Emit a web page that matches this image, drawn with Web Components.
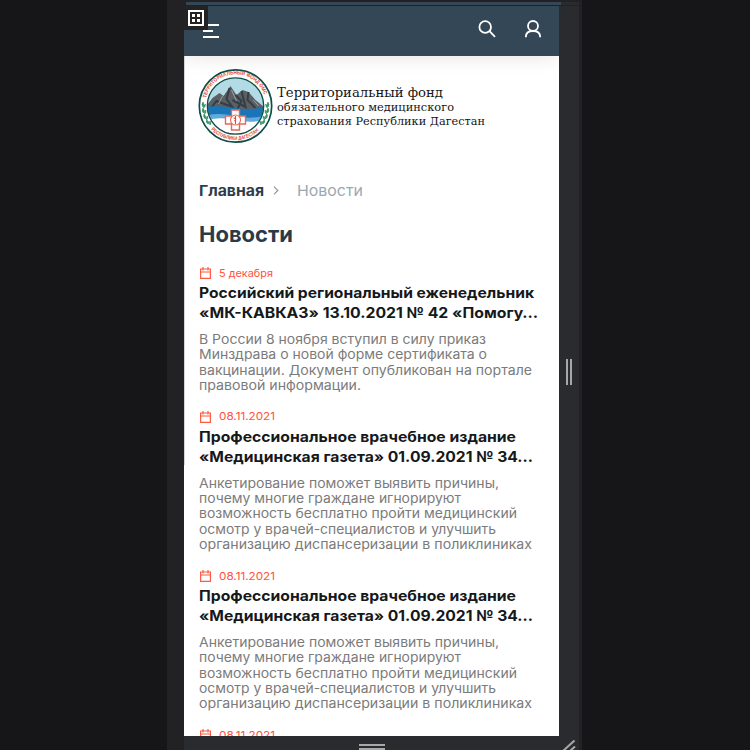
<!DOCTYPE html>
<html lang="ru">
<head>
<meta charset="utf-8">
<title>Новости</title>
<style>
html,body{margin:0;width:750px;height:750px;overflow:hidden;background:#161618;font-family:Inter,"Open Sans",sans-serif}
</style>
</head>
<body>
<device-frame>
  <page-header></page-header>
  <site-brand></site-brand>
  <bread-crumbs></bread-crumbs>
  <page-title><fit-line w="94">Новости</fit-line></page-title>
  <news-item>
    <fit-line slot="date" w="54">5 декабря</fit-line>
    <fit-line slot="title" w="335">Российский региональный еженедельник</fit-line>
    <fit-line slot="title" w="339">«МК-КАВКАЗ» 13.10.2021 № 42 «Помогу…</fit-line>
    <fit-line w="287">В России 8 ноября вступил в силу приказ</fit-line>
    <fit-line w="288">Минздрава о новой форме сертификата о</fit-line>
    <fit-line w="333">вакцинации. Документ опубликован на портале</fit-line>
    <fit-line w="162">правовой информации.</fit-line>
  </news-item>
  <news-item>
    <fit-line slot="date" w="56">08.11.2021</fit-line>
    <fit-line slot="title" w="317">Профессиональное врачебное издание</fit-line>
    <fit-line slot="title" w="334">«Медицинская газета» 01.09.2021 № 34…</fit-line>
    <fit-line w="300">Анкетирование поможет выявить причины,</fit-line>
    <fit-line w="262">почему многие граждане игнорируют</fit-line>
    <fit-line w="318">возможность бесплатно пройти медицинский</fit-line>
    <fit-line w="297">осмотр у врачей-специалистов и улучшить</fit-line>
    <fit-line w="333">организацию диспансеризации в поликлиниках</fit-line>
  </news-item>
  <news-item>
    <fit-line slot="date" w="56">08.11.2021</fit-line>
    <fit-line slot="title" w="317">Профессиональное врачебное издание</fit-line>
    <fit-line slot="title" w="334">«Медицинская газета» 01.09.2021 № 34…</fit-line>
    <fit-line w="300">Анкетирование поможет выявить причины,</fit-line>
    <fit-line w="262">почему многие граждане игнорируют</fit-line>
    <fit-line w="318">возможность бесплатно пройти медицинский</fit-line>
    <fit-line w="297">осмотр у врачей-специалистов и улучшить</fit-line>
    <fit-line w="333">организацию диспансеризации в поликлиниках</fit-line>
  </news-item>
  <news-item>
    <fit-line slot="date" w="56">08.11.2021</fit-line>
  </news-item>
</device-frame>
<script>
const define = (name, html, ready) => customElements.define(name, class extends HTMLElement {
  connectedCallback() {
    if (this.shadowRoot) return;
    this.attachShadow({mode: 'open'}).innerHTML = html;
    if (ready) ready(this);
  }
});

define('device-frame', `<style>
:host{display:grid;grid-template-columns:167px 17px 375px 20px 3px 168px;grid-template-rows:2px 3px 1px 730px 14px;width:750px;height:750px}
.track{grid-area:1/2/6/6;background:#222224}
.top{grid-area:2/3/3/5;margin-left:2px;margin-right:18px;background:#344757}
.edge{grid-area:2/4/3/5;margin-left:2px;background:#2a2b2e}
.side{grid-area:4/4/6/5;background:#2a2b2f;display:flex;justify-content:center;gap:2px;padding-top:353px;box-sizing:border-box}
.side i{width:2px;height:26px;background:#a8a8aa}
.bottom{grid-area:5/3/6/5;background:#2a2b2f;display:flex;flex-direction:column;align-items:center;gap:2px;padding-top:8px;box-sizing:border-box;padding-right:19px}
.bottom i{width:26px;height:2px;background:#a8a8aa;flex:none}
.screen{grid-area:4/3/5/4;background:#fff;overflow:hidden;height:730px}
.scroll{grid-area:4/3/5/4;justify-self:start;margin-top:50px;width:1px;height:409px;background:#d4d4d5}
.badge{position:absolute;left:184px;top:6px;width:24px;height:24px;background:#232224}
.grip{position:absolute;left:562px;top:738px}
svg{display:block}
</style>
<div class="track"></div><div class="top"></div><div class="edge"></div>
<div class="side"><i></i><i></i></div>
<div class="screen"><slot></slot></div>
<div class="scroll"></div>
<div class="bottom"><i></i><i></i></div>
<div class="badge"><svg width="24" height="24"><path d="M5 5H19V19H5Z" fill="none" stroke="#fff" stroke-width="2"/><path d="M8 8h3v3H8zM13 8h3v3h-3zM8 13h3v3H8zM13 13h3v3h-3z" fill="#fff"/></svg></div>
<svg class="grip" width="14" height="12"><path d="M1 13L12.500 2.500M8 13L13 8.500" stroke="#a8a8aa" stroke-width="2"/></svg>`);

define('page-header', `<style>
:host{display:flex;align-items:flex-start;height:50px;box-sizing:border-box;padding:13px 16px 0 19px;background:#344757;box-shadow:0 3px 18px rgba(0,0,0,.09)}
.menu{margin-top:5px}.find{margin-left:auto;margin-right:26px}
svg{display:block}
</style>
<svg class="menu" width="16" height="14"><path d="M0 1H16M0 7H10M0 13H16" stroke="#fff" stroke-width="2"/></svg>
<svg class="find" width="20" height="20" fill="none" stroke="#fff" stroke-width="1.8"><circle cx="8.200" cy="8" r="5.800"/><path d="M12.500 12.200L18 17.800"/></svg>
<svg width="20" height="20" fill="none" stroke="#fff" stroke-width="1.8"><circle cx="10" cy="7" r="5"/><path d="M2.800 18.200C2.800 14 6 12 10 12S17.200 14 17.200 18.200"/></svg>`);

define('brand-seal', `<style>:host{display:block;width:74px;height:76px}svg{display:block;overflow:visible}text{font:bold 5.200px "Liberation Sans",Arial,sans-serif;fill:#df4938}</style>
<svg width="74" height="76" viewBox="-.5 0 74 76">
<defs><clipPath id="disc"><circle cx="37" cy="38" r="27.800"/></clipPath>
<path id="arcTop" d="M7.500 30A30.200 30.200 0 0 1 66.500 30"/><path id="arcBottom" d="M12.500 61.500A34 34 0 0 0 61.500 61.500"/></defs>
<circle cx="37" cy="38" r="36.200" fill="#fff" stroke="#0e4d48" stroke-width="1.700"/>
<g clip-path="url(#disc)"><rect width="74" height="76" fill="#b2dbe5"/>
<path d="M5 42L14 30L21 25L25 28L32 18L38 27L44 22L50 24L57 32L69 42Z" fill="#5b6064"/>
<path d="M31 20L28 31L34 39L18 33L11 42M37 27L43 33L39 41M50 24L49 32L57 40M43 23L47 39L34 32" fill="none" stroke="#353d45" stroke-width="2"/>
<path d="M24 28L20 36M33 22L38 33M55 32L60 38" stroke="#9ba1a5"/>
<path d="M5 39Q21 37 37 40T69 38V52H5Z" fill="#1875b7"/><path d="M5 48Q20 44 36 48T69 47V67H5Z" fill="#5faada"/>
<path d="M5 53Q20 48 37 52T69 51V68H5Z" fill="#fff"/></g>
<circle cx="37" cy="38" r="28.200" fill="none" stroke="#0e4d48" stroke-width="1.300"/>
<path d="M33 42h8v6h6v8h-6v6h-8v-6h-6v-8h6z" fill="#fff" stroke="#e96555" stroke-width="1.400"/><circle cx="37" cy="52" r="5" fill="#fff" stroke="#e96555" stroke-width="1.100"/><path d="M37 48V56M35 50Q39 50 36 53" fill="none" stroke="#df4938" stroke-width="1.100"/>
<g fill="#3c9a68" stroke="#22854f" stroke-width=".5"><path id="leaves" d="M4.500 34q-2 3 0 5q2-2 0-5M7 36q-2 1-2 4q2-1 2-4M4.500 40q-2 3 .5 5q2-2-.5-5M7.500 42q-2 1-1.500 4q2-1 1.500-4M5.500 46q-1.500 3 1.500 5q1-3-1.500-5M9 48q-2 1-1 4q2-1 1-4M8 52q-1 3 2 4q1-3-2-4M11.500 53q-1.500 2 0 4q2-2 0-4"/><use href="#leaves" transform="matrix(-1 0 0 1 74 0)"/></g>
<text><textPath href="#arcTop" textLength="78" lengthAdjust="spacingAndGlyphs">ТЕРРИТОРИАЛЬНЫЙ ФОНД ОМС</textPath></text>
<text><textPath href="#arcBottom" textLength="53" lengthAdjust="spacingAndGlyphs">РЕСПУБЛИКИ ДАГЕСТАН</textPath></text>
</svg>`);

define('site-brand', `<style>
:host{display:flex;gap:5px;padding:12px 0 0 14px;height:112px;box-sizing:border-box;color:#151515;font-family:"DejaVu Serif Condensed","DejaVu Serif","Liberation Serif",serif;font-size:11.500px;line-height:14px;font-stretch:condensed}
.name{padding-top:18px}.first{font-size:13.300px}
</style><brand-seal></brand-seal><div class="name"><fit-line class="first" w="166">Территориальный фонд</fit-line><fit-line w="177">обязательного медицинского</fit-line><fit-line w="208">страхования Республики Дагестан</fit-line></div>`);

define('bread-crumbs', `<style>
:host{display:flex;align-items:center;height:24px;margin-top:11px;padding-left:15px;font-size:14.800px;line-height:24px;color:#9ba8b1}
b{color:#2c3e4d;font-weight:700}svg{margin:-1px 18px 0 9px}
</style><b><fit-line w="65">Главная</fit-line></b><svg width="6" height="9"><path d="M1 .7L4.800 4.500L1 8.300" fill="none" stroke="#8c979f" stroke-width="1.100"/></svg><fit-line w="66">Новости</fit-line>`);

define('page-title', `<style>
:host{display:block;margin:17px 0 15px;padding-left:15px;font-size:21px;line-height:30px;font-weight:700;color:#2b3a49}
</style><slot></slot>`);

define('news-item', `<style>
:host{display:block;padding:0 0 15.700px 15px}
.date{display:flex;align-items:center;gap:8px;height:16px;color:#ff513d;font-size:10.800px;line-height:16px;padding-left:1px}
.date slot{display:block;padding-top:1px}
.title{margin:2px 0 8.400px;color:#16181a;font-size:14.300px;line-height:20.300px;font-weight:700}
.text{color:#7b7b7b;font-size:13px;line-height:15.300px}
svg{display:block}
</style><div class="date"><svg width="11" height="12" fill="none" stroke="#ff5a42" stroke-width="1.200"><path d="M.6 2H10.400V11.300H.6ZM.5 5H10.500M3 0V3.500M8 0V3.500"/></svg><slot name="date"></slot></div>
<div class="title"><slot name="title"></slot></div><div class="text"><slot></slot></div>`);

/* A single line stretched to an exact measure, given in pixels by its w attribute. */
define('fit-line', `<style>:host{display:block;white-space:nowrap}span{display:inline-block;vertical-align:top;transform-origin:0 50%}</style><span></span>`, el => {
  const span = el.shadowRoot.querySelector('span');
  span.textContent = el.textContent;
  const target = Number(el.getAttribute('w'));
  el.style.width = target + 'px';
  span.style.transform = 'scaleX(' + target / span.getBoundingClientRect().width + ')';
});
</script>
</body>
</html>
